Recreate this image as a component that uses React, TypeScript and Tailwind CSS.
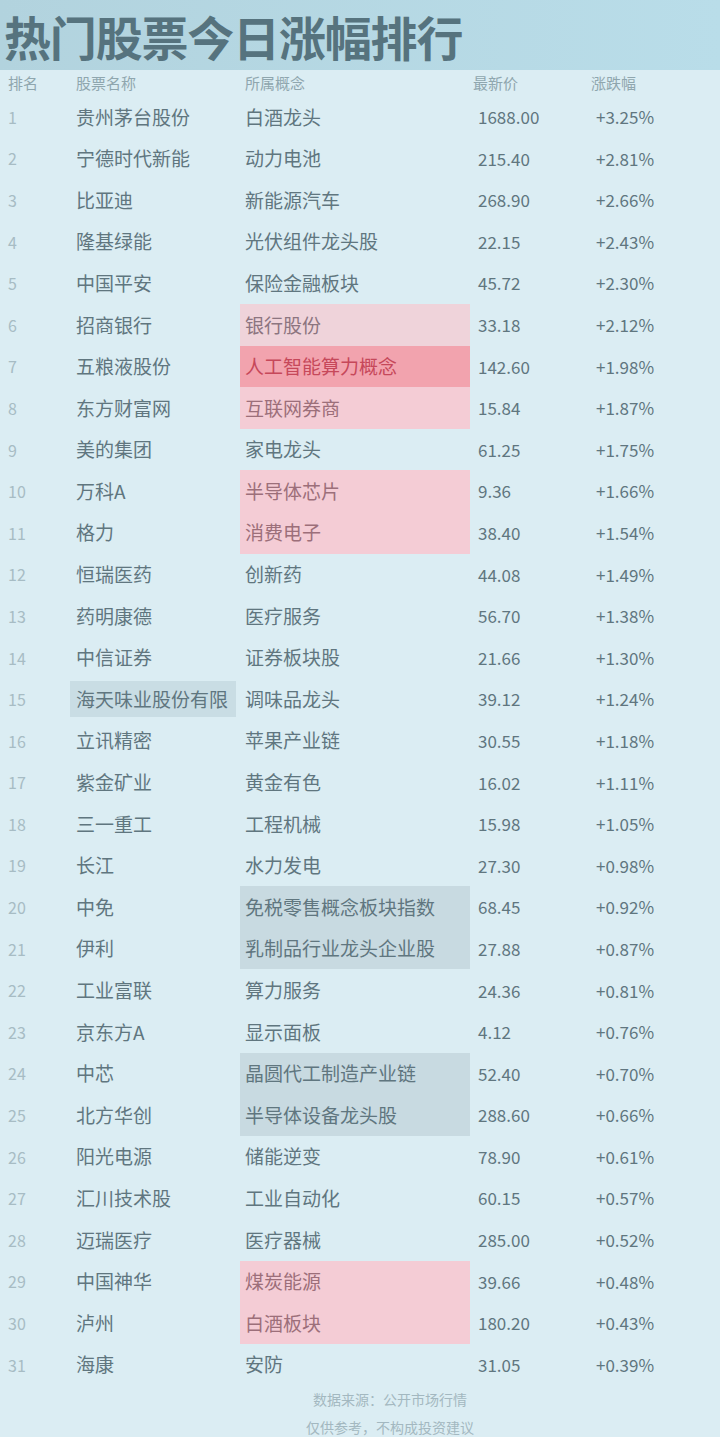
const rows: { name: string; tag: string; price: string; pct: string; hl?: "red" | "pink" | "pinkTop"; wide?: boolean; wideName?: boolean }[] = [
  { name: "贵州茅台股份", tag: "白酒龙头", price: "1688.00", pct: "+3.25%" },
  { name: "宁德时代新能", tag: "动力电池", price: "215.40", pct: "+2.81%" },
  { name: "比亚迪", tag: "新能源汽车", price: "268.90", pct: "+2.66%" },
  { name: "隆基绿能", tag: "光伏组件龙头股", price: "22.15", pct: "+2.43%" },
  { name: "中国平安", tag: "保险金融板块", price: "45.72", pct: "+2.30%" },
  { name: "招商银行", tag: "银行股份", price: "33.18", pct: "+2.12%", hl: "pinkTop" },
  { name: "五粮液股份", tag: "人工智能算力概念", price: "142.60", pct: "+1.98%", hl: "red" },
  { name: "东方财富网", tag: "互联网券商", price: "15.84", pct: "+1.87%", hl: "pink" },
  { name: "美的集团", tag: "家电龙头", price: "61.25", pct: "+1.75%" },
  { name: "万科A", tag: "半导体芯片", price: "9.36", pct: "+1.66%", hl: "pink" },
  { name: "格力", tag: "消费电子", price: "38.40", pct: "+1.54%", hl: "pink" },
  { name: "恒瑞医药", tag: "创新药", price: "44.08", pct: "+1.49%" },
  { name: "药明康德", tag: "医疗服务", price: "56.70", pct: "+1.38%" },
  { name: "中信证券", tag: "证券板块股", price: "21.66", pct: "+1.30%" },
  { name: "海天味业股份有限", tag: "调味品龙头", price: "39.12", pct: "+1.24%", wideName: true },
  { name: "立讯精密", tag: "苹果产业链", price: "30.55", pct: "+1.18%" },
  { name: "紫金矿业", tag: "黄金有色", price: "16.02", pct: "+1.11%" },
  { name: "三一重工", tag: "工程机械", price: "15.98", pct: "+1.05%" },
  { name: "长江", tag: "水力发电", price: "27.30", pct: "+0.98%" },
  { name: "中免", tag: "免税零售概念板块指数", price: "68.45", pct: "+0.92%", wide: true },
  { name: "伊利", tag: "乳制品行业龙头企业股", price: "27.88", pct: "+0.87%", wide: true },
  { name: "工业富联", tag: "算力服务", price: "24.36", pct: "+0.81%" },
  { name: "京东方A", tag: "显示面板", price: "4.12", pct: "+0.76%" },
  { name: "中芯", tag: "晶圆代工制造产业链", price: "52.40", pct: "+0.70%", wide: true },
  { name: "北方华创", tag: "半导体设备龙头股", price: "288.60", pct: "+0.66%", wide: true },
  { name: "阳光电源", tag: "储能逆变", price: "78.90", pct: "+0.61%" },
  { name: "汇川技术股", tag: "工业自动化", price: "60.15", pct: "+0.57%" },
  { name: "迈瑞医疗", tag: "医疗器械", price: "285.00", pct: "+0.52%" },
  { name: "中国神华", tag: "煤炭能源", price: "39.66", pct: "+0.48%", hl: "pink" },
  { name: "泸州", tag: "白酒板块", price: "180.20", pct: "+0.43%", hl: "pink" },
  { name: "海康", tag: "安防", price: "31.05", pct: "+0.39%" },
];

const font = "font-['Noto_Sans_CJK_SC','Noto_Sans',sans-serif]";

export default function App() {
  return (
    <div className={`w-[720px] h-[1437px] bg-[#dbedf3] overflow-hidden ${font}`}>
      <div className="h-[70px] flex items-center bg-gradient-to-r from-[#b2d3de] to-[#b9dde9]">
        <h1 className="pl-1 text-[47px] leading-none font-bold tracking-tight text-[#56737e]">
          热门股票今日涨幅排行
        </h1>
      </div>

      <div className="h-[26px] flex items-center text-[15px] text-[#8fa6ae]">
        <div className="w-[70px] pl-2">排名</div>
        <div className="w-[170px] pl-[6px]">股票名称</div>
        <div className="w-[225px] pl-[5px]">所属概念</div>
        <div className="w-[118px] pl-[8px]">最新价</div>
        <div className="flex-1 pl-[8px]">涨跌幅</div>
      </div>

      <div className="flex flex-col">
        {rows.map((r, i) => (
          <div key={i} className="h-[41.6px] flex items-center text-[19px] text-[#60767f]">
            <div className="w-[70px] pl-2 text-[16px] text-[#a7bcc4]">{i + 1}</div>
            <div className="w-[170px] h-full flex items-center">
              <span
                className={`pl-[6px] pr-2 whitespace-nowrap ${
                  r.wideName ? "bg-[#c9dde4] py-[4px]" : ""
                }`}
              >
                {r.name}
              </span>
            </div>
            <div className="w-[230px] h-full flex items-center">
              <span
                className={`w-full h-full flex items-center pl-[5px] whitespace-nowrap overflow-hidden ${
                  r.hl === "red"
                    ? "bg-[#f2a3ae] text-[#c6485a]"
                    : r.hl === "pink"
                    ? "bg-[#f4ccd5] text-[#9c6f7a]"
                    : r.hl === "pinkTop"
                    ? "bg-[#efd3da] text-[#8c7580]"
                    : r.wide
                    ? "bg-[#c8dae1]"
                    : ""
                }`}
              >
                {r.tag}
              </span>
            </div>
            <div className="w-[118px] pl-[8px] text-[17px]">{r.price}</div>
            <div className="flex-1 pl-[8px] text-[17px]">{r.pct}</div>
          </div>
        ))}
      </div>

      <div className="flex flex-col items-center pl-[60px] text-[14px] leading-[28px] text-[#a3b8c0]">
        <div>数据来源：公开市场行情</div>
        <div>仅供参考，不构成投资建议</div>
      </div>
    </div>
  );
}
